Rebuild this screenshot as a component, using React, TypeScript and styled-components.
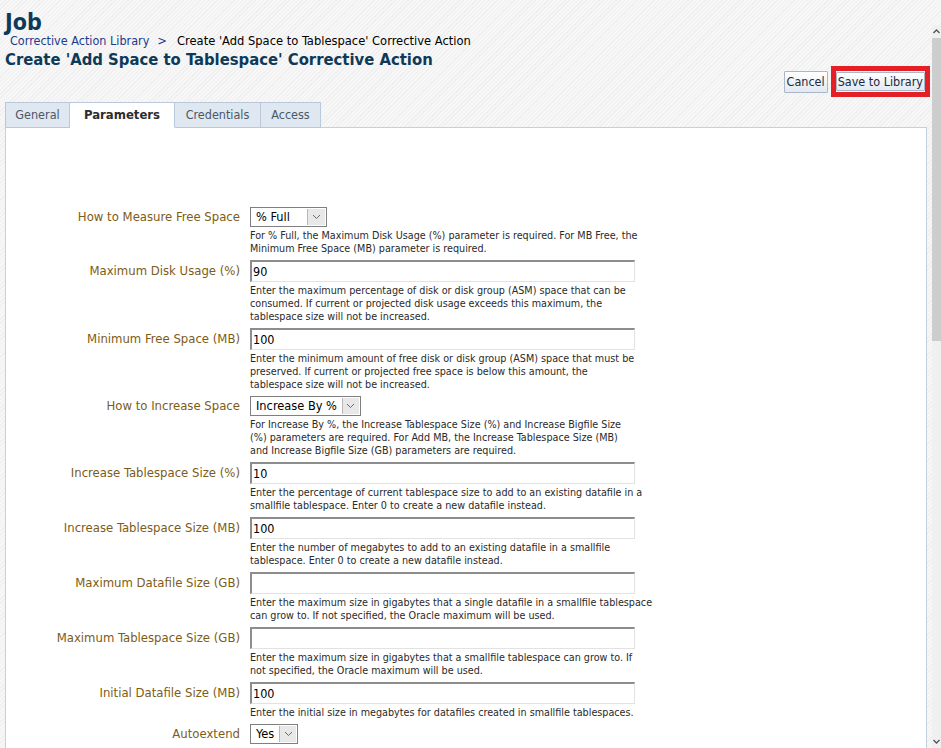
import React, { FC } from 'react'
import styled, { createGlobalStyle } from 'styled-components'

const GlobalStyle = createGlobalStyle`
	html, body {
		margin: 0;
		padding: 0;
		height: 748px;
		overflow: hidden;
	}
	body {
		font-family: 'DejaVu Sans Condensed', 'Liberation Sans', sans-serif;
		background: repeating-linear-gradient(-45deg, #f7f7f7 0 2px, #efefef 2px 3px);
	}
`

const Page = styled.div`
	display: flex;
	height: 748px;
`

const Main = styled.div`
	flex: 1;
	display: flex;
	flex-direction: column;
	padding: 0 5px;
	min-width: 0;
	overflow: hidden;
	& > * {
		flex-shrink: 0;
	}
`

const Title = styled.h1`
	margin: 0;
	padding-top: 10px;
	font-size: 23px;
	line-height: 24px;
	font-weight: bold;
	color: #0e3a5a;
`

const Crumbs = styled.div`
	display: flex;
	align-items: baseline;
	padding-left: 5px;
	font-size: 12.8px;
	line-height: 14px;
	color: #000;
`

const CrumbLink = styled.span`
	font-size: 12.5px;
	color: #1b3a8c;
`

const CrumbSep = styled.span`
	color: #1b3a8c;
	padding: 0 10px 0 8px;
`

const Heading = styled.h2`
	margin: 2px 0 0;
	font-size: 16.5px;
	line-height: 20px;
	font-weight: bold;
	color: #0e3a5a;
`

const Actions = styled.div`
	display: flex;
	justify-content: flex-end;
	align-items: center;
	gap: 3px;
	margin: -4px -3px 0 0;
	height: 31px;
`

const Button = styled.button<{ $h: number }>`
	font-family: inherit;
	font-size: 12.5px;
	color: #1c2a3c;
	height: ${p => p.$h}px;
	padding: 0 2px;
	border: 1px solid #a9b7c8;
	border-radius: 1px;
	background: linear-gradient(#ffffff, #e2e9f2);
	cursor: pointer;
`

const Highlight = styled.div`
	border: 5px solid #e41f26;
	padding: 1px 0;
	display: flex;
	& > button {
		padding: 0 1px;
	}
`

const Tabs = styled.div`
	display: flex;
	margin-top: 5px;
	height: 25px;
`

const Tab = styled.div<{ $active?: boolean; $w: number }>`
	box-sizing: border-box;
	width: ${p => p.$w}px;
	display: flex;
	align-items: center;
	justify-content: center;
	padding-bottom: 2px;
	font-size: ${p => (p.$active ? 13 : 12.5)}px;
	font-weight: ${p => (p.$active ? 'bold' : 'normal')};
	color: ${p => (p.$active ? '#2d2d2d' : '#4b5866')};
	background: ${p => (p.$active ? '#ffffff' : '#dfe7f1')};
	border: 1px solid #b9c8da;
	border-left: none;
	border-bottom-color: ${p => (p.$active ? '#ffffff' : '#b9c8da')};
	margin-bottom: -1px;
	position: relative;
	z-index: 1;
	&:first-child {
		border-left: 1px solid #b9c8da;
	}
`

const Panel = styled.div`
	flex: 1 1 auto !important;
	min-height: 0;
	background: #fff;
	border: 1px solid #c3d0df;
	border-bottom: none;
	padding-top: 79px;
`

const Form = styled.div`
	display: grid;
	grid-template-columns: 234px 1fr;
	column-gap: 10px;
	row-gap: 5px;
`

const Label = styled.div<{ $h: number }>`
	text-align: right;
	font-size: 13px;
	line-height: ${p => p.$h}px;
	color: #7d5c17;
	white-space: nowrap;
`

const Field = styled.div`
	display: flex;
	flex-direction: column;
	align-items: flex-start;
`

const TextInput = styled.div`
	box-sizing: border-box;
	width: 385px;
	height: 22px;
	border-top: 2px solid #8d8d8d;
	border-left: 2px solid #8d8d8d;
	border-right: 1px solid #e2e2e2;
	border-bottom: 1px solid #e2e2e2;
	background: #fff;
	font-size: 12.5px;
	line-height: 19px;
	padding-left: 1px;
	color: #000;
`

const Select = styled.div<{ $w: number }>`
	box-sizing: border-box;
	display: flex;
	justify-content: space-between;
	width: ${p => p.$w}px;
	height: 20px;
	border: 1px solid #7f7f7f;
	background: #fff;
`

const SelectText = styled.div`
	font-size: 12.7px;
	line-height: 18px;
	padding: 0 4px 0 5px;
	color: #000;
	white-space: nowrap;
`

const SelectArrow = styled.div`
	width: 17px;
	display: flex;
	align-items: center;
	justify-content: center;
	background: #e8e8e8;
	border-left: 1px solid #b8b8b8;
	margin: 1px;
`

const Help = styled.div`
	margin-top: 2px;
	font-size: 10.7px;
	line-height: 13px;
	color: #2a2a2a;
	white-space: nowrap;
`

const Scrollbar = styled.div`
	width: 9px;
	margin-top: 25px;
	background: #f0f0f0;
	display: flex;
	flex-direction: column;
	align-items: center;
`

const ScrollThumb = styled.div`
	width: 9px;
	height: 303px;
	background: #cdcdcd;
`

const ScrollArrow = styled.div`
	height: 13px;
	display: flex;
	align-items: center;
	justify-content: center;
`

const Spacer = styled.div`
	flex: 1;
`

const Chevron: FC = () => (
	<svg width="9" height="6" viewBox="0 0 9 6">
		<path d="M1 1 L4.5 4.5 L8 1" fill="none" stroke="#6a6a6a" strokeWidth="1" />
	</svg>
)

type Row = {
	label: string
	kind: 'input' | 'select'
	value: string
	width?: number
	help: string[]
}

const rows: Row[] = [
	{
		label: 'How to Measure Free Space',
		kind: 'select',
		value: '% Full',
		width: 77,
		help: [
			'For % Full, the Maximum Disk Usage (%) parameter is required. For MB Free, the',
			'Minimum Free Space (MB) parameter is required.',
		],
	},
	{
		label: 'Maximum Disk Usage (%)',
		kind: 'input',
		value: '90',
		help: [
			'Enter the maximum percentage of disk or disk group (ASM) space that can be',
			'consumed. If current or projected disk usage exceeds this maximum, the',
			'tablespace size will not be increased.',
		],
	},
	{
		label: 'Minimum Free Space (MB)',
		kind: 'input',
		value: '100',
		help: [
			'Enter the minimum amount of free disk or disk group (ASM) space that must be',
			'preserved. If current or projected free space is below this amount, the',
			'tablespace size will not be increased.',
		],
	},
	{
		label: 'How to Increase Space',
		kind: 'select',
		value: 'Increase By %',
		width: 111,
		help: [
			'For Increase By %, the Increase Tablespace Size (%) and Increase Bigfile Size',
			'(%) parameters are required. For Add MB, the Increase Tablespace Size (MB)',
			'and Increase Bigfile Size (GB) parameters are required.',
		],
	},
	{
		label: 'Increase Tablespace Size (%)',
		kind: 'input',
		value: '10',
		help: [
			'Enter the percentage of current tablespace size to add to an existing datafile in a',
			'smallfile tablespace. Enter 0 to create a new datafile instead.',
		],
	},
	{
		label: 'Increase Tablespace Size (MB)',
		kind: 'input',
		value: '100',
		help: [
			'Enter the number of megabytes to add to an existing datafile in a smallfile',
			'tablespace. Enter 0 to create a new datafile instead.',
		],
	},
	{
		label: 'Maximum Datafile Size (GB)',
		kind: 'input',
		value: '',
		help: [
			'Enter the maximum size in gigabytes that a single datafile in a smallfile tablespace',
			'can grow to. If not specified, the Oracle maximum will be used.',
		],
	},
	{
		label: 'Maximum Tablespace Size (GB)',
		kind: 'input',
		value: '',
		help: [
			'Enter the maximum size in gigabytes that a smallfile tablespace can grow to. If',
			'not specified, the Oracle maximum will be used.',
		],
	},
	{
		label: 'Initial Datafile Size (MB)',
		kind: 'input',
		value: '100',
		help: ['Enter the initial size in megabytes for datafiles created in smallfile tablespaces.'],
	},
	{
		label: 'Autoextend',
		kind: 'select',
		value: 'Yes',
		width: 48,
		help: ['Enable autoextend when creating new datafiles in smallfile tablespaces.'],
	},
]

const App: FC = () => (
	<>
		<GlobalStyle />
		<Page>
			<Main>
				<Title>Job</Title>
				<Crumbs>
					<CrumbLink>Corrective Action Library</CrumbLink>
					<CrumbSep>&gt;</CrumbSep>
					<span>Create 'Add Space to Tablespace' Corrective Action</span>
				</Crumbs>
				<Heading>Create 'Add Space to Tablespace' Corrective Action</Heading>
				<Actions>
					<Button $h={22}>Cancel</Button>
					<Highlight>
						<Button $h={19}>Save to Library</Button>
					</Highlight>
				</Actions>
				<Tabs>
					<Tab $w={65}>General</Tab>
					<Tab $w={105} $active>
						Parameters
					</Tab>
					<Tab $w={86}>Credentials</Tab>
					<Tab $w={60}>Access</Tab>
				</Tabs>
				<Panel>
					<Form>
						{rows.map(r => (
							<React.Fragment key={r.label}>
								<Label $h={r.kind === 'select' ? 20 : 22}>{r.label}</Label>
								<Field>
									{r.kind === 'select' ? (
										<Select $w={r.width ?? 60}>
											<SelectText>{r.value}</SelectText>
											<SelectArrow>
												<Chevron />
											</SelectArrow>
										</Select>
									) : (
										<TextInput>{r.value}</TextInput>
									)}
									<Help>
										{r.help.map(line => (
											<div key={line}>{line}</div>
										))}
									</Help>
								</Field>
							</React.Fragment>
						))}
					</Form>
				</Panel>
			</Main>
			<Scrollbar>
				<ScrollArrow>
					<svg width="7" height="5" viewBox="0 0 7 5">
						<path d="M0.5 4 L3.5 1 L6.5 4" fill="none" stroke="#555" strokeWidth="1.3" />
					</svg>
				</ScrollArrow>
				<ScrollThumb />
				<Spacer />
				<ScrollArrow>
					<svg width="7" height="5" viewBox="0 0 7 5">
						<path d="M0.5 1 L3.5 4 L6.5 1" fill="none" stroke="#555" strokeWidth="1.3" />
					</svg>
				</ScrollArrow>
			</Scrollbar>
		</Page>
	</>
)

export default App
